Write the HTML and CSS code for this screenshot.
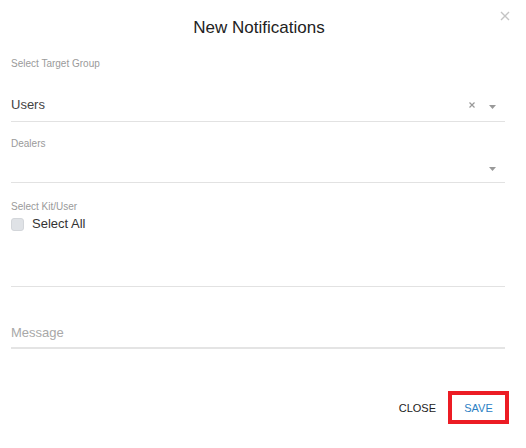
FILE: index.html
```html
<!DOCTYPE html>
<html>
<head>
<meta charset="utf-8">
<link rel="stylesheet" href="styles.css">
</head>
<body>
<div class="dialog">
  <div class="header">
    <h2 class="title">New Notifications</h2>
    <span class="close-x">
      <svg width="10" height="10" viewBox="0 0 10 10"><path d="M1 1L9 9M9 1L1 9" stroke="#c4c4c4" stroke-width="1.4"/></svg>
    </span>
  </div>
  <div class="field field-target">
    <div class="label">Select Target Group</div>
    <div class="select">
      <span class="value">Users</span>
      <span class="icons">
        <svg class="clear" width="6" height="6" viewBox="0 0 6 6"><path d="M0.5 0.5L5.5 5.5M5.5 0.5L0.5 5.5" stroke="#999" stroke-width="1.2"/></svg>
        <svg class="arrow" width="7" height="4" viewBox="0 0 7 4"><path d="M0 0H7L3.5 4Z" fill="#999"/></svg>
      </span>
    </div>
  </div>
  <div class="field field-dealers">
    <div class="label">Dealers</div>
    <div class="select">
      <span class="value"></span>
      <span class="icons">
        <svg class="arrow" width="7" height="4" viewBox="0 0 7 4"><path d="M0 0H7L3.5 4Z" fill="#999"/></svg>
      </span>
    </div>
  </div>
  <div class="field field-kit">
    <div class="label">Select Kit/User</div>
    <label class="check-row">
      <span class="checkbox"></span>
      <span class="check-text">Select All</span>
    </label>
    <div class="kit-area"></div>
  </div>
  <div class="message">Message</div>
  <div class="actions">
    <button class="btn btn-close">CLOSE</button>
    <button class="btn btn-save">SAVE</button>
  </div>
</div>
</body>
</html>
```
FILE: styles.css
```css
* { box-sizing: border-box; }
html, body { margin: 0; padding: 0; background: #fff; }
body { font-family: "Liberation Sans", Arial, sans-serif; color: #333; }
.dialog { width: 526px; height: 448px; padding: 0 21px 0 11px; position: relative; }
.header { height: 50px; display: flex; justify-content: center; align-items: flex-start; }
.title { margin: 18px 0 0 0; font-size: 17px; font-weight: 400; color: #222; line-height: 19px; padding-left: 2px; }
.close-x { position: absolute; right: 16px; top: 11px; display: block; line-height: 0; }
.label { font-size: 10px; color: #9a9a9a; line-height: 12px; }
.field-target { padding-top: 8px; }
.select { display: flex; align-items: center; justify-content: space-between; border-bottom: 1px solid #e2e2e2; }
.field-target .select { margin-top: 24px; height: 28px; padding-bottom: 5px; }
.value { font-size: 13px; color: #444; line-height: 16px; }
.icons { display: flex; align-items: center; gap: 14px; padding-right: 9px; }
.clear { display: block; margin-top: -1px; }
.arrow { display: block; margin-top: 3px; }
.field-dealers { padding-top: 16px; }
.field-dealers .select { margin-top: 7px; height: 26px; padding-bottom: 5px; }
.field-kit { padding-top: 18px; }
.check-row { display: flex; align-items: center; gap: 8px; margin-top: 3px; }
.checkbox { width: 13px; height: 13px; border-radius: 3px; background: #dfe2e6; border: 1px solid #d3d6da; display: block; }
.check-text { font-size: 13px; color: #333; line-height: 16px; }
.kit-area { height: 55px; border-bottom: 1px solid #e2e2e2; }
.message { margin-top: 38px; font-size: 13px; color: #a8a8a8; line-height: 16px; padding-bottom: 6px; border-bottom: 2px solid #e4e4e4; }
.actions { display: flex; justify-content: flex-end; align-items: center; gap: 12px; margin-top: 42px; margin-right: -4px; }
.btn { font-family: inherit; font-size: 11px; background: #fff; border: none; padding: 0; cursor: pointer; }
.btn-close { color: #222; }
.btn-save { color: #2c80c4; width: 61px; height: 33px; border: 4px solid #ec1c24; }
```
